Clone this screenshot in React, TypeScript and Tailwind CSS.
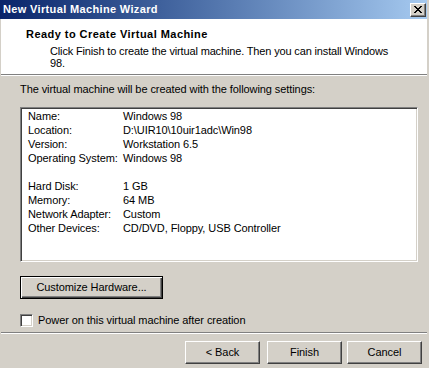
import React from "react";

const SETTINGS: [string, string][] = [
  ["Name:", "Windows 98"],
  ["Location:", "D:\\UIR10\\10uir1adc\\Win98"],
  ["Version:", "Workstation 6.5"],
  ["Operating System:", "Windows 98"],
  ["", ""],
  ["Hard Disk:", "1 GB"],
  ["Memory:", "64 MB"],
  ["Network Adapter:", "Custom"],
  ["Other Devices:", "CD/DVD, Floppy, USB Controller"],
];

// classic raised button bevel
const raised =
  "border border-t-white border-l-white border-r-[#404040] border-b-[#404040] shadow-[inset_-1px_-1px_#808080] bg-[#d4d0c8]";

function CloseGlyph() {
  const rows = ["11000011", "01100110", "00111100", "00011000", "00111100", "01100110", "11000011"];
  return (
    <svg width="8" height="7" viewBox="0 0 8 7" shapeRendering="crispEdges">
      {rows.map((r, y) =>
        r.split("").map((c, x) => (c === "1" ? <rect key={`${x}-${y}`} x={x} y={y} width="1" height="1" fill="#000" /> : null))
      )}
    </svg>
  );
}

function Button({ label, className = "" }: { label: string; className?: string }) {
  return (
    <div className={`${raised} w-[75px] h-[23px] flex items-center justify-center text-black ${className}`}>
      {label}
    </div>
  );
}

export default function App() {
  return (
    <div className="w-[429px] h-[368px] bg-[#d4d0c8] overflow-hidden text-[11px] leading-[13px] text-black font-['Liberation_Sans',Arial,sans-serif] tracking-[-0.08px]">
      {/* title bar */}
      <div className="h-[19px] mr-[2px] bg-gradient-to-r from-[#0a246a] to-[#a6caf0] flex items-center justify-between pl-[3px] pr-[1px]">
        <span className="font-bold text-white text-[11px] tracking-[0.35px]">New Virtual Machine Wizard</span>
        <div className={`${raised} w-[16px] h-[14px] flex items-center justify-center`}>
          <CloseGlyph />
        </div>
      </div>

      <div className="ml-[1px] mr-[2px]">
        {/* header */}
        <div className="bg-white h-[56px] pt-[9px] border-b border-[#808080]">
          <div className="pl-[25px] font-bold tracking-[0.45px]">Ready to Create Virtual Machine</div>
          <div className="pl-[49px] mt-[4px] leading-[12px] tracking-[-0.15px]">
            Click Finish to create the virtual machine. Then you can install Windows
            <br />
            98.
          </div>
        </div>
        <div className="h-px bg-white" />

        {/* body */}
        <div className="px-[19px] pt-[7px]">
          <div>The virtual machine will be created with the following settings:</div>
          <div className="mt-[11px] h-[155px] w-[398px] bg-white border border-t-[#808080] border-l-[#808080] border-b-white border-r-white shadow-[inset_1px_1px_#404040,inset_-1px_-1px_#d4d0c8] pl-[7px] pt-[1px]">
            {SETTINGS.map(([k, v], i) => (
              <div key={i} className="flex h-[14px] items-center">
                <span className="w-[95px]">{k}</span>
                <span>{v}</span>
              </div>
            ))}
          </div>

          <div className="mt-[14px] w-[143px] h-[23px] border border-black bg-[#d4d0c8] shadow-[inset_1px_1px_#fff,inset_-1px_-1px_#404040,inset_-2px_-2px_#808080] flex items-center justify-center">
            Customize Hardware...
          </div>

          <div className="mt-[15px] flex items-center gap-[5px]">
            <div className="w-[13px] h-[13px] bg-white border border-t-[#808080] border-l-[#808080] border-b-white border-r-white shadow-[inset_1px_1px_#404040,inset_-1px_-1px_#d4d0c8]" />
            <span>Power on this virtual machine after creation</span>
          </div>
        </div>

        {/* separator */}
        <div className="mt-[5px] h-px bg-[#808080]" />
        <div className="h-px bg-white" />

        <div className="flex justify-end pr-[5px] pt-[7px]">
          <Button label="< Back" />
          <Button label="Finish" className="ml-[7px]" />
          <Button label="Cancel" className="ml-[5px]" />
        </div>
      </div>
    </div>
  );
}
